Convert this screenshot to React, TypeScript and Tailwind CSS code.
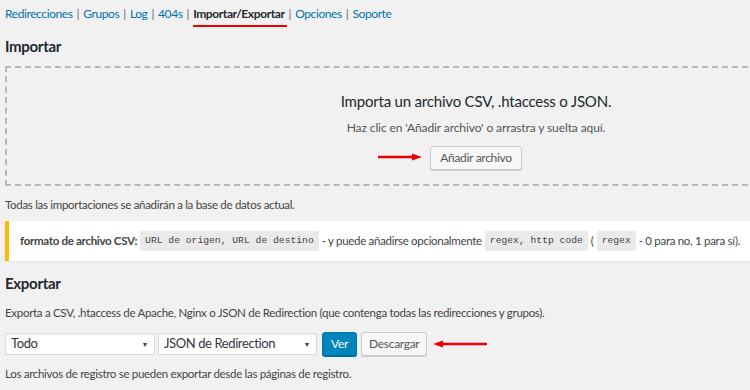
const navItems = ["Redirecciones", "Grupos", "Log", "404s", "Importar/Exportar", "Opciones", "Soporte"];

function Arrow({ left, w = 44 }: { left?: boolean; w?: number }) {
  return (
    <svg width={w} height="8" viewBox={`0 0 ${w} 8`} className={left ? "rotate-180" : ""}>
      <line x1="0" y1="4" x2={w - 8} y2="4" stroke="#e00" strokeWidth="2.5" />
      <polygon points={`${w - 10},0.5 ${w},4 ${w - 10},7.5`} fill="#e00" />
    </svg>
  );
}

function Select({ label, w }: { label: string; w: string }) {
  return (
    <div className={`flex h-[22px] ${w} items-center justify-between border border-[#ddd] bg-white pl-[5px] pr-[6px] text-[13px] tracking-[-0.4px] text-[#32373c] shadow-[inset_0_1px_2px_rgba(0,0,0,0.07)]`}>
      <span>{label}</span>
      <span className="text-[7px] text-[#444]">▼</span>
    </div>
  );
}

function Code({ children }: { children: string }) {
  return (
    <code className="mx-[3px] bg-[#eaeaea] px-[5px] py-[3px] font-['Liberation_Mono',monospace] text-[9.7px] tracking-normal text-[#444]">
      {children}
    </code>
  );
}

export default function App() {
  return (
    <div className="h-[390px] w-[750px] overflow-hidden bg-[#f1f1f1] font-['Lato',sans-serif] tracking-[-0.3px] text-[#444]">
      <div className="w-[960px] pl-[5px] pt-[5px]">
        <nav className="flex items-center text-[12px] leading-[18px] tracking-[-0.4px] text-[#0073aa]">
          {navItems.map((item, i) => (
            <span key={item} className="flex items-center">
              {i > 0 && <span className="mx-[4px] text-[#666]">|</span>}
              {item === "Importar/Exportar" ? (
                <span className="relative font-bold text-[#23282d]">
                  {item}
                  <span className="absolute left-0 right-[-2px] top-[20px] h-[2px] bg-[#e00]" />
                </span>
              ) : (
                <span>{item}</span>
              )}
            </span>
          ))}
        </nav>

        <h2 className="mt-[13px] text-[15px] font-bold leading-[20px] text-[#23282d]">Importar</h2>

        <div className="mt-[10px] flex h-[120px] w-[942px] flex-col items-center border-2 border-dashed border-[#b4b9be] pt-[23px]">
          <p className="text-[15px] leading-[20px] tracking-[-0.2px] text-[#23282d]">Importa un archivo CSV, .htaccess o JSON.</p>
          <p className="mt-[9px] text-[12px] leading-[16px] tracking-[-0.1px] text-[#555]">Haz clic en 'Añadir archivo' o arrastra y suelta aquí.</p>
          <div className="relative mt-[8px]">
            <div className="absolute right-[100%] top-[9px] mr-[8px]">
              <Arrow />
            </div>
            <button className="h-[24px] rounded-[3px] border border-[#ccc] bg-[#f7f7f7] px-[9px] text-[12px] text-[#555] shadow-[0_1px_0_#ccc]">
              Añadir archivo
            </button>
          </div>
        </div>

        <p className="mt-[11px] text-[11.5px] leading-[16px] text-[#444]">Todas las importaciones se añadirán a la base de datos actual.</p>

        <div className="mt-[8px] flex h-[40px] items-center border-l-4 border-[#ffb900] bg-white pl-[11px] text-[11.5px] text-[#444] shadow-[0_1px_1px_rgba(0,0,0,0.04)]">
          <span className="font-bold">formato de archivo CSV:</span>
          <Code>URL de origen, URL de destino</Code>
          <span>- y puede añadirse opcionalmente</span>
          <Code>regex, http code</Code>
          <span>(</span>
          <Code>regex</Code>
          <span>- 0 para no, 1 para sí).</span>
        </div>

        <h2 className="mt-[12px] text-[15px] font-bold leading-[20px] text-[#23282d]">Exportar</h2>

        <p className="mt-[12px] text-[11.5px] leading-[16px] text-[#444]">
          Exporta a CSV, .htaccess de Apache, Nginx o JSON de Redirection (que contenga todas las redirecciones y grupos).
        </p>

        <div className="mt-[11px] flex items-center gap-[3px]">
          <Select label="Todo" w="w-[150px]" />
          <Select label="JSON de Redirection" w="w-[159px]" />
          <button className="ml-[2px] h-[24px] rounded-[3px] border border-[#0073aa] bg-[#0085ba] px-[8px] text-[12px] text-white shadow-[0_1px_0_#006799]">
            Ver
          </button>
          <button className="ml-[1px] h-[24px] rounded-[3px] border border-[#ccc] bg-[#f7f7f7] px-[7px] text-[12px] text-[#555] shadow-[0_1px_0_#ccc]">
            Descargar
          </button>
          <div className="ml-[3px]">
            <Arrow left w={54} />
          </div>
        </div>

        <p className="mt-[10px] text-[11.5px] leading-[16px] text-[#444]">Los archivos de registro se pueden exportar desde las páginas de registro.</p>
      </div>
    </div>
  );
}
